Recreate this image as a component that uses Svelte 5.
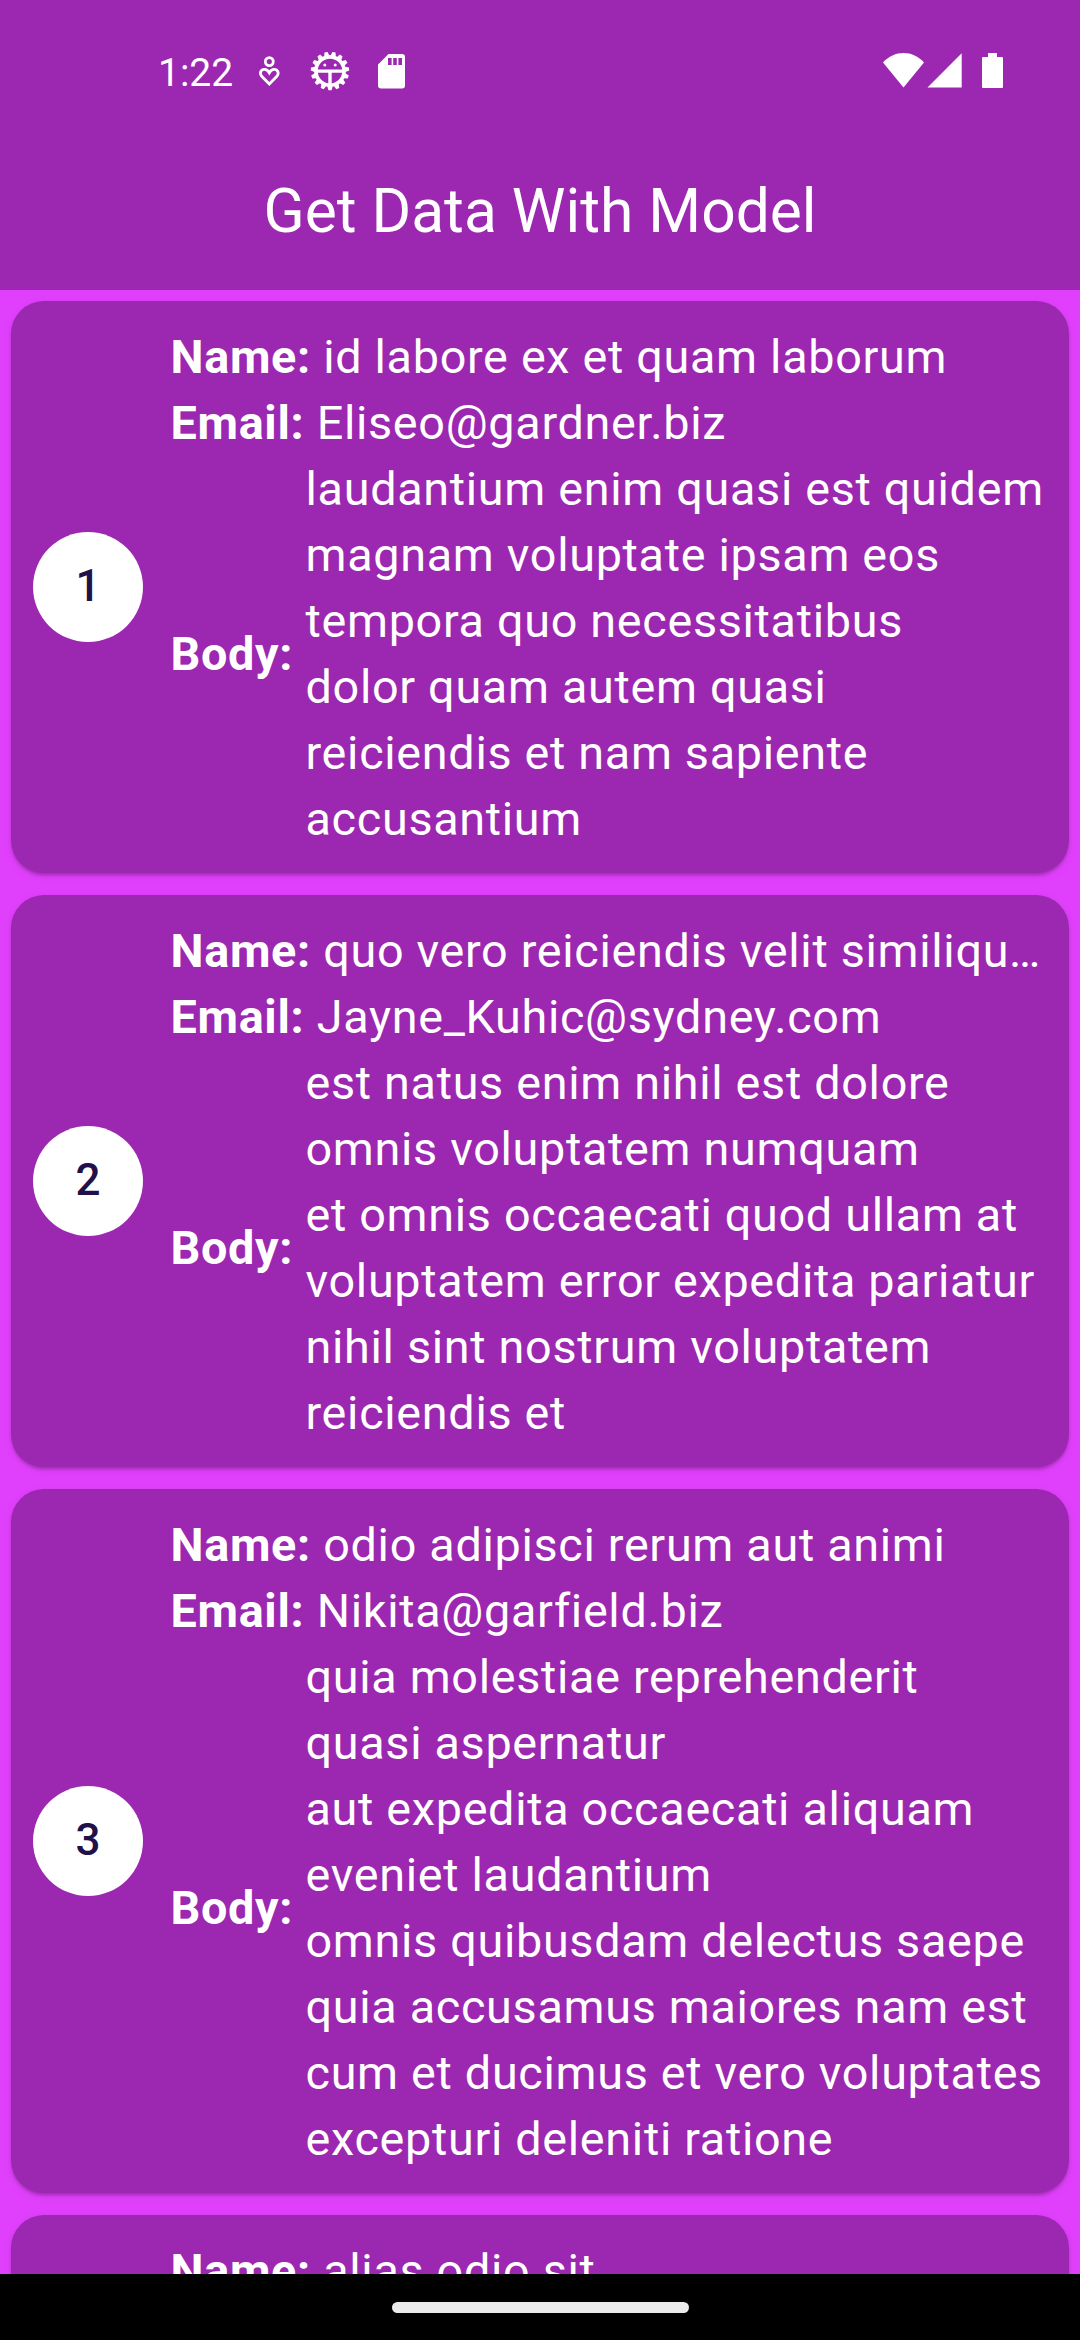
<script>
  const comments = [
    {
      id: 1,
      name: 'id labore ex et quam laborum',
      email: 'Eliseo@gardner.biz',
      body: 'laudantium enim quasi est quidem\nmagnam voluptate ipsam eos\ntempora quo necessitatibus\ndolor quam autem quasi\nreiciendis et nam sapiente\naccusantium'
    },
    {
      id: 2,
      name: 'quo vero reiciendis velit similiqu…',
      email: 'Jayne_Kuhic@sydney.com',
      body: 'est natus enim nihil est dolore\nomnis voluptatem numquam\net omnis occaecati quod ullam at\nvoluptatem error expedita pariatur\nnihil sint nostrum voluptatem\nreiciendis et'
    },
    {
      id: 3,
      name: 'odio adipisci rerum aut animi',
      email: 'Nikita@garfield.biz',
      body: 'quia molestiae reprehenderit\nquasi aspernatur\naut expedita occaecati aliquam\neveniet laudantium\nomnis quibusdam delectus saepe\nquia accusamus maiores nam est\ncum et ducimus et vero voluptates\nexcepturi deleniti ratione'
    },
    { id: 4, name: 'alias odio sit' }
  ];
  const teeth = Array.from({ length: 15 }, (_, i) => i * 24);
</script>

<div class="screen">
  <header>
    <div class="status">
      <span class="clock">1:22</span>
      <svg class="person" width="24" height="32" viewBox="0 0 24 32" fill="none" stroke="#fff" stroke-width="2.8">
        <circle cx="12.3" cy="6.6" r="4" />
        <path d="M12.3 28.9 L4.7 21.3 C2 18.2 4 14.4 7.4 14.4 C9.8 14.4 11.3 15.9 12.3 17.8 C13.3 15.9 14.8 14.4 17.2 14.4 C20.6 14.4 22.6 18.2 19.9 21.3 Z" />
      </svg>
      <svg class="gear" width="40" height="40" viewBox="-20 -20 40 40">
        {#each teeth as angle}
          <path d="M-3 14 L-1.6 19.2 H1.6 L3 14 Z" fill="#fff" transform="rotate({angle})" />
        {/each}
        <circle r="14.1" fill="none" stroke="#fff" stroke-width="3.6" />
        <path d="M-13 0.1 H13 M0 0 V14" stroke="#fff" stroke-width="3.4" />
        <circle cx="-5.2" cy="-6" r="1.5" fill="#fff" />
        <circle cx="5.2" cy="-6" r="1.5" fill="#fff" />
      </svg>
      <svg class="sd" width="27" height="35" viewBox="0 0 27 35">
        <path fill="#fff" fill-rule="evenodd" d="M10.5 0 H24 Q27 0 27 3 V31.5 Q27 34.5 24 34.5 H3 Q0 34.5 0 31.5 V10.5 Z M10 4 V11 H13.6 V4 Z M15.2 4 V11 H18.8 V4 Z M20.4 4 V11 H24 V4 Z" />
      </svg>
      <span class="spacer"></span>
      <svg class="wifi" width="41" height="35" viewBox="0 0 41 35"><path fill="#fff" d="M20.5 34.5 L0 9.6 C11 -3.2 30 -3.2 41 9.6 Z" /></svg>
      <svg class="signal" width="35" height="35" viewBox="0 0 35 35"><path fill="#fff" d="M0.5 34.5 L34.7 0.2 V34.5 Z" /></svg>
      <svg class="battery" width="21" height="35" viewBox="0 0 21 35">
        <path fill="#fff" d="M6 0 H15 V4 H20 Q21 4 21 5 V34 Q21 35 20 35 H1 Q0 35 0 34 V5 Q0 4 1 4 H6 Z" />
      </svg>
    </div>
    <h1>Get Data With Model</h1>
  </header>

  <main>
    {#each comments as c (c.id)}
      <article>
        {#if c.body}
          <div class="avatar">{c.id}</div>
        {:else}
          <div class="avatar-space"></div>
        {/if}
        <div class="details">
          <p class="line"><b>{'Name: '}</b>{c.name}</p>
          {#if c.email}<p class="line"><b>{'Email: '}</b>{c.email}</p>{/if}
          {#if c.body}
            <div class="body"><b>{'Body: '}</b><p>{c.body}</p></div>
          {/if}
        </div>
      </article>
    {/each}
  </main>

  <footer><div class="handle"></div></footer>
</div>

<style>
  :global(body) {
    margin: 0;
  }
  .screen {
    width: 1080px;
    height: 2340px;
    display: flex;
    flex-direction: column;
    overflow: hidden;
    background: #e040fb;
    color: #fff;
    font-family: Roboto, sans-serif;
  }
  header {
    flex: none;
    height: 290px;
    background: #9c27b0;
  }
  .status {
    box-sizing: border-box;
    height: 136px;
    padding: 6px 77px 0 158px;
    display: flex;
    align-items: center;
  }
  svg {
    flex: none;
    display: block;
  }
  .clock {
    width: 74px;
    padding-top: 4px;
    font-size: 39px;
    line-height: 46px;
    white-space: nowrap;
  }
  .person {
    margin-left: 25px;
  }
  .gear {
    margin-left: 29px;
  }
  .sd {
    margin: 1px 0 0 28px;
  }
  .spacer {
    flex: 1;
  }
  .wifi {
    margin-bottom: 1px;
  }
  .signal {
    margin: 0 0 1px 3px;
  }
  .battery {
    margin: 0 0 1px 20px;
  }
  h1 {
    margin: 0;
    height: 151px;
    line-height: 151px;
    text-align: center;
    font-size: 60.5px;
    font-weight: 400;
  }
  main {
    flex: 1;
    min-height: 0;
    overflow: hidden;
    display: flex;
    flex-direction: column;
    gap: 22px;
    padding: 11px 11px 0;
  }
  article {
    flex: none;
    box-sizing: border-box;
    display: flex;
    align-items: center;
    gap: 27.5px;
    padding: 22px;
    border-radius: 33px;
    background: #9c27b0;
    box-shadow:
      0 2.75px 2.75px -2.75px rgba(0, 0, 0, 0.2),
      0 2.75px 2.75px rgba(0, 0, 0, 0.14),
      0 2.75px 8.25px rgba(0, 0, 0, 0.08);
  }
  .avatar,
  .avatar-space {
    flex: none;
    width: 110px;
  }
  .avatar {
    height: 110px;
    border-radius: 50%;
    background: #fff;
    color: #21104a;
    font-size: 44px;
    font-weight: 500;
    line-height: 108px;
    text-align: center;
  }
  .details {
    flex: 1;
    min-width: 0;
    padding-top: 1px;
    margin-bottom: -1px;
    font-size: 46.75px;
    line-height: 66px;
    letter-spacing: 0.6875px;
  }
  p {
    margin: 0;
  }
  b {
    font-weight: 700;
    white-space: pre;
  }
  .line {
    white-space: nowrap;
  }
  .body {
    display: flex;
    align-items: center;
  }
  .body p {
    white-space: pre;
  }
  footer {
    flex: none;
    height: 66px;
    display: flex;
    align-items: center;
    justify-content: center;
    background: #000;
  }
  .handle {
    width: 297px;
    height: 11px;
    border-radius: 6px;
    background: #ebebeb;
  }
</style>
